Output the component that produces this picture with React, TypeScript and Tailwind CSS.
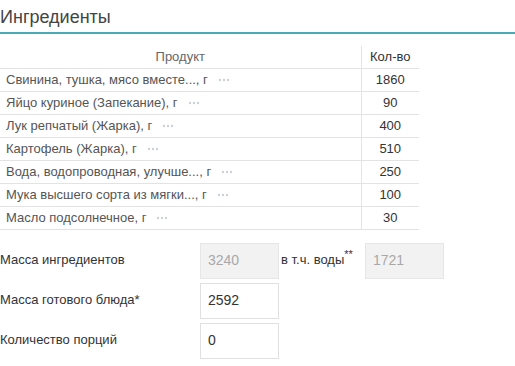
import React from 'react';

const ingredients = [
  { name: 'Свинина, тушка, мясо вместе..., г', qty: 1860 },
  { name: 'Яйцо куриное (Запекание), г', qty: 90 },
  { name: 'Лук репчатый (Жарка), г', qty: 400 },
  { name: 'Картофель (Жарка), г', qty: 510 },
  { name: 'Вода, водопроводная, улучше..., г', qty: 250 },
  { name: 'Мука высшего сорта из мягки..., г', qty: 100 },
  { name: 'Масло подсолнечное, г', qty: 30 },
];

// small "more" marker after each product name
const MoreDots = () => (
  <svg width="12" height="4" viewBox="0 0 12 4" className="inline-block ml-[10px] align-middle">
    <circle cx="2" cy="2" r="1.2" fill="#ccd0d8" />
    <circle cx="6" cy="2" r="1.2" fill="#ccd0d8" />
    <circle cx="10" cy="2" r="1.2" fill="#ccd0d8" />
  </svg>
);

const Field = ({ value, disabled }: { value: string; disabled?: boolean }) => (
  <div
    className={
      disabled
        ? 'w-[79px] h-[36px] flex items-center pl-[7px] text-[14px] text-[#a8a8a8] bg-[#f2f2f2] border border-[#e6e6e6]'
        : 'w-[79px] h-[36px] flex items-center pl-[7px] text-[14px] text-[#333] bg-white border border-[#e0e0e0]'
    }
  >
    {value}
  </div>
);

export default function App() {
  return (
    <div className="w-[515px] h-[366px] bg-white overflow-hidden font-['Liberation_Sans',Arial,sans-serif]">
      {/* Header */}
      <div className="pt-[6px] pb-[4px] leading-[22px] text-[18px] text-[#444] border-b-2 border-[#47aab5]">
        Ингредиенты
      </div>

      {/* Ingredients table */}
      <table className="mt-[12px] w-[419px] border-collapse text-[13px]">
        <thead>
          <tr className="h-[22px]">
            <th className="w-[361px] font-normal text-[#666] border-r border-[#e3e3e3]">Продукт</th>
            <th className="font-normal text-[#333]">Кол-во</th>
          </tr>
        </thead>
        <tbody>
          {ingredients.map((item) => (
            <tr key={item.name} className="h-[23px] border-t border-b border-[#e3e3e3]">
              <td className="pl-[6px] text-[#555] border-r border-[#e3e3e3] whitespace-nowrap">
                {item.name}
                <MoreDots />
              </td>
              <td className="text-center text-[#333]">{item.qty}</td>
            </tr>
          ))}
        </tbody>
      </table>

      {/* Totals */}
      <div className="mt-[13px] flex flex-col gap-[4px] text-[13px] text-[#333]">
        <div className="flex items-center">
          <div className="w-[200px] pb-[2px]">Масса ингредиентов</div>
          <Field value="3240" disabled />
          <div className="w-[86px] pl-[2px] pb-[2px]">
            в т.ч. воды<sup className="text-[11px]">**</sup>
          </div>
          <Field value="1721" disabled />
        </div>
        <div className="flex items-center">
          <div className="w-[200px] pb-[2px]">Масса готового блюда*</div>
          <Field value="2592" />
        </div>
        <div className="flex items-center">
          <div className="w-[200px] pb-[2px]">Количество порций</div>
          <Field value="0" />
        </div>
      </div>
    </div>
  );
}
